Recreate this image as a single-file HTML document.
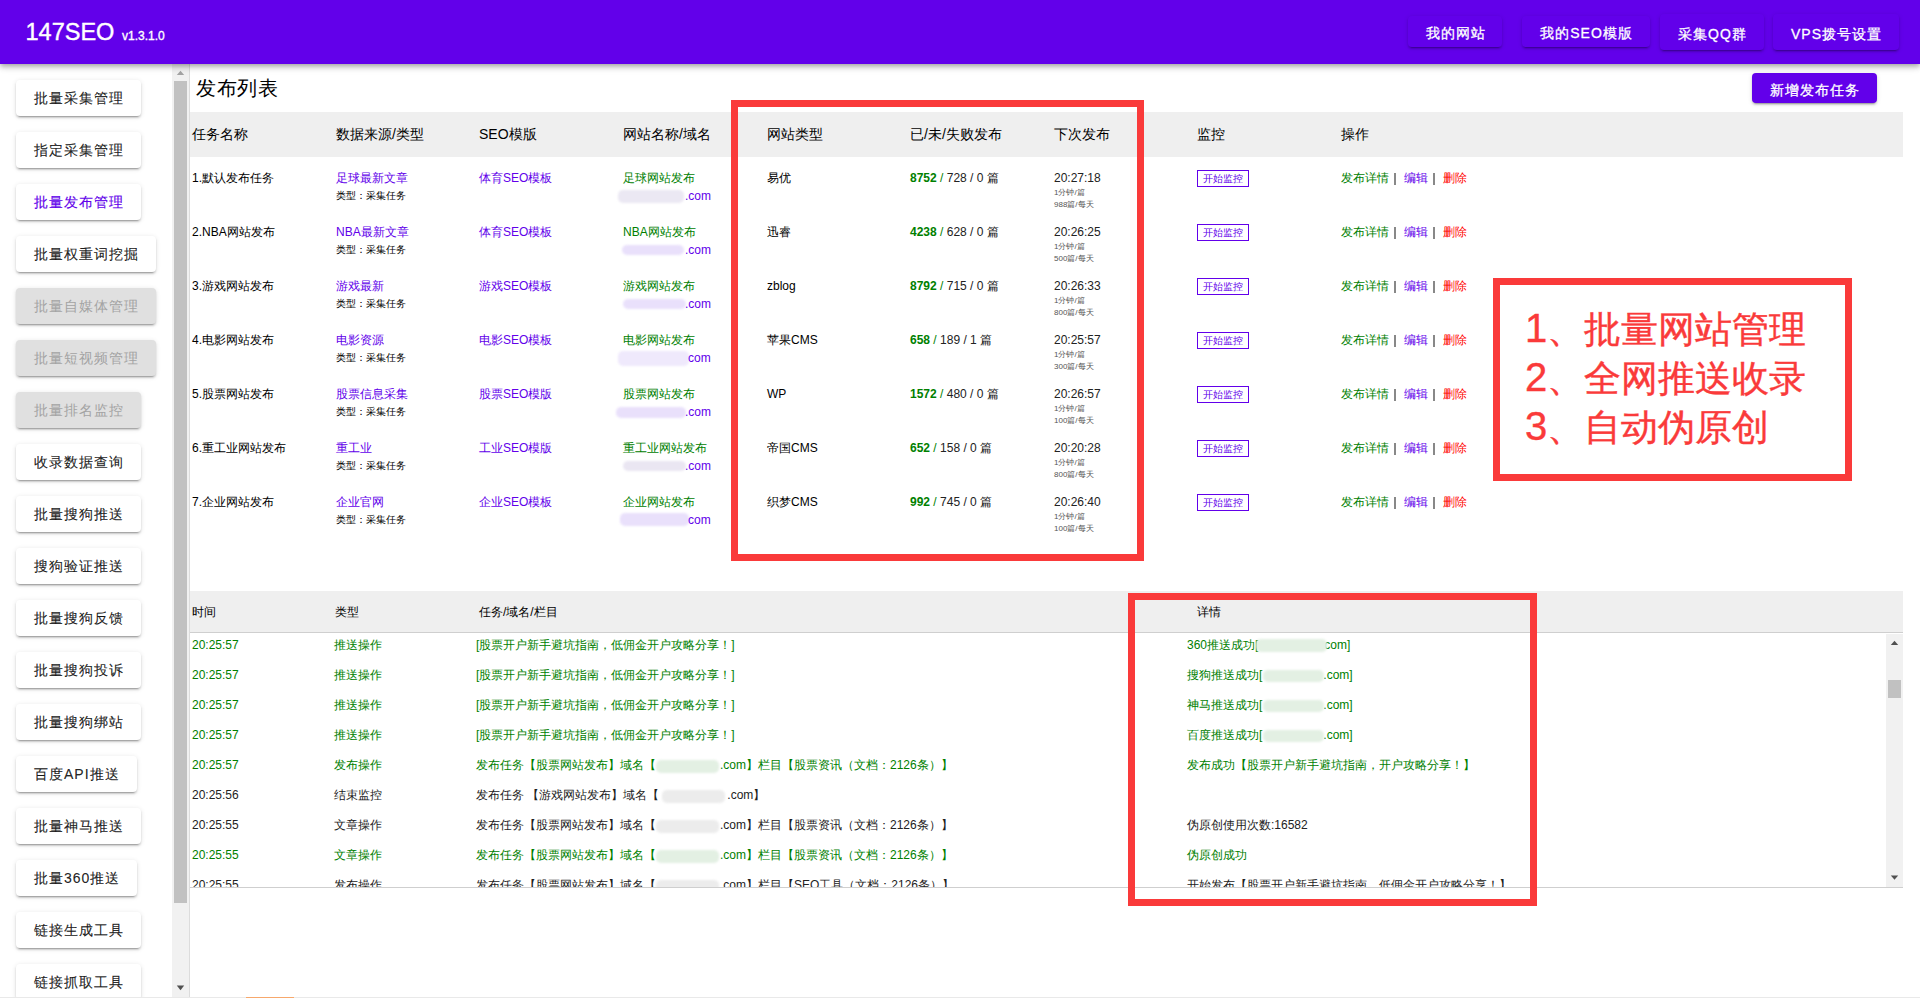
<!DOCTYPE html><html><head><meta charset="utf-8"><style>
*{margin:0;padding:0;box-sizing:border-box}
html,body{width:1920px;height:998px;overflow:hidden;background:#fff;font-family:"Liberation Sans",sans-serif;color:#000}
.ab{position:absolute;white-space:nowrap}
#hdr{position:absolute;left:0;top:0;width:1920px;height:64px;background:#6200ea;z-index:5;
 box-shadow:0 2px 4px -1px rgba(0,0,0,.2),0 4px 5px 0 rgba(0,0,0,.14),0 1px 10px 0 rgba(0,0,0,.12)}
.hb{position:absolute;background:#6200ea;color:#fff;font-size:14px;letter-spacing:1px;text-indent:1px;text-align:center;border-radius:4px;padding-top:2px;-webkit-text-stroke:0.3px #fff;
 box-shadow:0 3px 1px -2px rgba(0,0,0,.2),0 2px 2px 0 rgba(0,0,0,.14),0 1px 5px 0 rgba(0,0,0,.12)}
.sb{position:absolute;left:16px;height:36px;line-height:37px;-webkit-text-stroke:0.15px currentColor;background:#fff;color:rgba(0,0,0,.87);font-size:14px;letter-spacing:1px;padding:0 17px 0 18px;border-radius:4px;white-space:nowrap;
 box-shadow:0 3px 1px -2px rgba(0,0,0,.2),0 2px 2px 0 rgba(0,0,0,.14),0 1px 5px 0 rgba(0,0,0,.12)}
.sb.dis{background:#e0e0e0;color:#a3a3a3;-webkit-text-stroke:0}
.sb.act{color:#6200ea}
.th{position:absolute;font-size:14px;line-height:16px;white-space:nowrap}
.t12{position:absolute;font-size:12px;line-height:14px;white-space:nowrap}
.rb{position:absolute;border:7px solid #fa3a3a}
.blob{position:absolute;border-radius:5px;filter:blur(1px)}
</style></head><body>

<div id="hdr">
<div class="ab" style="left:25.5px;top:18px;font-size:23.5px;line-height:28px;color:#fff;-webkit-text-stroke:0.4px #fff">147SEO</div>
<div class="ab" style="left:122px;top:29px;font-size:12px;line-height:14px;color:#fff;-webkit-text-stroke:0.35px #fff">v1.3.1.0</div>
<div class="hb" style="left:1408px;top:16px;width:94px;height:31px;line-height:31px">我的网站</div>
<div class="hb" style="left:1522px;top:16px;width:128px;height:31px;line-height:31px">我的SEO模版</div>
<div class="hb" style="left:1660px;top:14px;width:104px;height:36px;line-height:36px">采集QQ群</div>
<div class="hb" style="left:1773px;top:14px;width:126px;height:36px;line-height:36px">VPS拨号设置</div>
</div>
<div class="sb" style="top:80px">批量采集管理</div>
<div class="sb" style="top:132px">指定采集管理</div>
<div class="sb act" style="top:184px">批量发布管理</div>
<div class="sb" style="top:236px">批量权重词挖掘</div>
<div class="sb dis" style="top:288px">批量自媒体管理</div>
<div class="sb dis" style="top:340px">批量短视频管理</div>
<div class="sb dis" style="top:392px">批量排名监控</div>
<div class="sb" style="top:444px">收录数据查询</div>
<div class="sb" style="top:496px">批量搜狗推送</div>
<div class="sb" style="top:548px">搜狗验证推送</div>
<div class="sb" style="top:600px">批量搜狗反馈</div>
<div class="sb" style="top:652px">批量搜狗投诉</div>
<div class="sb" style="top:704px">批量搜狗绑站</div>
<div class="sb" style="top:756px">百度API推送</div>
<div class="sb" style="top:808px">批量神马推送</div>
<div class="sb" style="top:860px">批量360推送</div>
<div class="sb" style="top:912px">链接生成工具</div>
<div class="sb" style="top:964px">链接抓取工具</div>
<div class="ab" style="left:172px;top:64px;width:17px;height:934px;background:#f1f1f1"></div>
<div class="ab" style="left:189px;top:64px;width:1px;height:934px;background:#dcdcdc"></div>
<div class="ab" style="left:174px;top:81px;width:13px;height:822px;background:#c1c1c1"></div>
<svg class="ab" style="left:172px;top:64px" width="17" height="17"><path d="M4.8 11 L8.5 6.8 L12.2 11 Z" fill="#a3a3a3"/></svg>
<svg class="ab" style="left:172px;top:981px" width="17" height="17"><path d="M4.8 4.4 L12.2 4.4 L8.5 9.2 Z" fill="#505050"/></svg>
<div class="ab" style="left:196px;top:76px;font-size:20px;line-height:24px;letter-spacing:0.5px">发布列表</div>
<div class="hb" style="left:1752px;top:73px;width:125px;height:30px;line-height:30px">新增发布任务</div>
<div class="ab" style="left:190px;top:112px;width:1713px;height:45px;background:#efefef"></div>
<div class="th" style="left:192px;top:126px">任务名称</div>
<div class="th" style="left:336px;top:126px">数据来源/类型</div>
<div class="th" style="left:479px;top:126px">SEO模版</div>
<div class="th" style="left:623px;top:126px">网站名称/域名</div>
<div class="th" style="left:767px;top:126px">网站类型</div>
<div class="th" style="left:910px;top:126px">已/未/失败发布</div>
<div class="th" style="left:1054px;top:126px">下次发布</div>
<div class="th" style="left:1197px;top:126px">监控</div>
<div class="th" style="left:1341px;top:126px">操作</div>
<div class="t12" style="left:192px;top:171px">1.默认发布任务</div>
<div class="t12" style="left:336px;top:171px;color:#6200ea">足球最新文章</div>
<div class="ab" style="left:336px;top:190px;font-size:10px;line-height:12px">类型：采集任务</div>
<div class="t12" style="left:479px;top:171px;color:#6200ea">体育SEO模板</div>
<div class="t12" style="left:623px;top:171px;color:#008000">足球网站发布</div>
<div class="blob" style="left:618px;top:190px;width:66px;height:13px;background:#ebe8f3"></div>
<div class="t12" style="left:685px;top:189px;color:#6200ea">.com</div>
<div class="t12" style="left:767px;top:171px">易优</div>
<div class="t12" style="left:910px;top:171px;color:#222"><span style="color:#008000"><b>8752</b> /</span> 728 / 0 篇</div>
<div class="t12" style="left:1054px;top:171px;color:#222">20:27:18</div>
<div class="ab" style="left:1054px;top:188px;font-size:8px;line-height:10px;color:#555">1分钟/篇</div>
<div class="ab" style="left:1054px;top:200px;font-size:8px;line-height:10px;color:#555">988篇/每天</div>
<div class="ab" style="left:1197px;top:170px;width:52px;height:17px;border:1px solid #6200ea;color:#6200ea;font-size:10px;line-height:15px;text-align:center">开始监控</div>
<div class="t12" style="left:1341px;top:171px;color:#008000">发布详情</div>
<div class="ab" style="left:1394px;top:173px;width:2px;height:12px;background:#888"></div>
<div class="t12" style="left:1404px;top:171px;color:#6200ea">编辑</div>
<div class="ab" style="left:1433px;top:173px;width:2px;height:12px;background:#888"></div>
<div class="t12" style="left:1443px;top:171px;color:red">删除</div>
<div class="t12" style="left:192px;top:225px">2.NBA网站发布</div>
<div class="t12" style="left:336px;top:225px;color:#6200ea">NBA最新文章</div>
<div class="ab" style="left:336px;top:244px;font-size:10px;line-height:12px">类型：采集任务</div>
<div class="t12" style="left:479px;top:225px;color:#6200ea">体育SEO模板</div>
<div class="t12" style="left:623px;top:225px;color:#008000">NBA网站发布</div>
<div class="blob" style="left:622px;top:245px;width:62px;height:10px;background:#e9e0fb"></div>
<div class="t12" style="left:685px;top:243px;color:#6200ea">.com</div>
<div class="t12" style="left:767px;top:225px">迅睿</div>
<div class="t12" style="left:910px;top:225px;color:#222"><span style="color:#008000"><b>4238</b> /</span> 628 / 0 篇</div>
<div class="t12" style="left:1054px;top:225px;color:#222">20:26:25</div>
<div class="ab" style="left:1054px;top:242px;font-size:8px;line-height:10px;color:#555">1分钟/篇</div>
<div class="ab" style="left:1054px;top:254px;font-size:8px;line-height:10px;color:#555">500篇/每天</div>
<div class="ab" style="left:1197px;top:224px;width:52px;height:17px;border:1px solid #6200ea;color:#6200ea;font-size:10px;line-height:15px;text-align:center">开始监控</div>
<div class="t12" style="left:1341px;top:225px;color:#008000">发布详情</div>
<div class="ab" style="left:1394px;top:227px;width:2px;height:12px;background:#888"></div>
<div class="t12" style="left:1404px;top:225px;color:#6200ea">编辑</div>
<div class="ab" style="left:1433px;top:227px;width:2px;height:12px;background:#888"></div>
<div class="t12" style="left:1443px;top:225px;color:red">删除</div>
<div class="t12" style="left:192px;top:279px">3.游戏网站发布</div>
<div class="t12" style="left:336px;top:279px;color:#6200ea">游戏最新</div>
<div class="ab" style="left:336px;top:298px;font-size:10px;line-height:12px">类型：采集任务</div>
<div class="t12" style="left:479px;top:279px;color:#6200ea">游戏SEO模板</div>
<div class="t12" style="left:623px;top:279px;color:#008000">游戏网站发布</div>
<div class="blob" style="left:623px;top:299px;width:63px;height:10px;background:#e9e0fb"></div>
<div class="t12" style="left:685px;top:297px;color:#6200ea">.com</div>
<div class="t12" style="left:767px;top:279px">zblog</div>
<div class="t12" style="left:910px;top:279px;color:#222"><span style="color:#008000"><b>8792</b> /</span> 715 / 0 篇</div>
<div class="t12" style="left:1054px;top:279px;color:#222">20:26:33</div>
<div class="ab" style="left:1054px;top:296px;font-size:8px;line-height:10px;color:#555">1分钟/篇</div>
<div class="ab" style="left:1054px;top:308px;font-size:8px;line-height:10px;color:#555">800篇/每天</div>
<div class="ab" style="left:1197px;top:278px;width:52px;height:17px;border:1px solid #6200ea;color:#6200ea;font-size:10px;line-height:15px;text-align:center">开始监控</div>
<div class="t12" style="left:1341px;top:279px;color:#008000">发布详情</div>
<div class="ab" style="left:1394px;top:281px;width:2px;height:12px;background:#888"></div>
<div class="t12" style="left:1404px;top:279px;color:#6200ea">编辑</div>
<div class="ab" style="left:1433px;top:281px;width:2px;height:12px;background:#888"></div>
<div class="t12" style="left:1443px;top:279px;color:red">删除</div>
<div class="t12" style="left:192px;top:333px">4.电影网站发布</div>
<div class="t12" style="left:336px;top:333px;color:#6200ea">电影资源</div>
<div class="ab" style="left:336px;top:352px;font-size:10px;line-height:12px">类型：采集任务</div>
<div class="t12" style="left:479px;top:333px;color:#6200ea">电影SEO模板</div>
<div class="t12" style="left:623px;top:333px;color:#008000">电影网站发布</div>
<div class="blob" style="left:618px;top:351px;width:71px;height:15px;background:#efe9fc"></div>
<div class="t12" style="left:688px;top:351px;color:#6200ea">com</div>
<div class="t12" style="left:767px;top:333px">苹果CMS</div>
<div class="t12" style="left:910px;top:333px;color:#222"><span style="color:#008000"><b>658</b> /</span> 189 / 1 篇</div>
<div class="t12" style="left:1054px;top:333px;color:#222">20:25:57</div>
<div class="ab" style="left:1054px;top:350px;font-size:8px;line-height:10px;color:#555">1分钟/篇</div>
<div class="ab" style="left:1054px;top:362px;font-size:8px;line-height:10px;color:#555">300篇/每天</div>
<div class="ab" style="left:1197px;top:332px;width:52px;height:17px;border:1px solid #6200ea;color:#6200ea;font-size:10px;line-height:15px;text-align:center">开始监控</div>
<div class="t12" style="left:1341px;top:333px;color:#008000">发布详情</div>
<div class="ab" style="left:1394px;top:335px;width:2px;height:12px;background:#888"></div>
<div class="t12" style="left:1404px;top:333px;color:#6200ea">编辑</div>
<div class="ab" style="left:1433px;top:335px;width:2px;height:12px;background:#888"></div>
<div class="t12" style="left:1443px;top:333px;color:red">删除</div>
<div class="t12" style="left:192px;top:387px">5.股票网站发布</div>
<div class="t12" style="left:336px;top:387px;color:#6200ea">股票信息采集</div>
<div class="ab" style="left:336px;top:406px;font-size:10px;line-height:12px">类型：采集任务</div>
<div class="t12" style="left:479px;top:387px;color:#6200ea">股票SEO模版</div>
<div class="t12" style="left:623px;top:387px;color:#008000">股票网站发布</div>
<div class="blob" style="left:616px;top:407px;width:70px;height:11px;background:#e9e0fb"></div>
<div class="t12" style="left:685px;top:405px;color:#6200ea">.com</div>
<div class="t12" style="left:767px;top:387px">WP</div>
<div class="t12" style="left:910px;top:387px;color:#222"><span style="color:#008000"><b>1572</b> /</span> 480 / 0 篇</div>
<div class="t12" style="left:1054px;top:387px;color:#222">20:26:57</div>
<div class="ab" style="left:1054px;top:404px;font-size:8px;line-height:10px;color:#555">1分钟/篇</div>
<div class="ab" style="left:1054px;top:416px;font-size:8px;line-height:10px;color:#555">100篇/每天</div>
<div class="ab" style="left:1197px;top:386px;width:52px;height:17px;border:1px solid #6200ea;color:#6200ea;font-size:10px;line-height:15px;text-align:center">开始监控</div>
<div class="t12" style="left:1341px;top:387px;color:#008000">发布详情</div>
<div class="ab" style="left:1394px;top:389px;width:2px;height:12px;background:#888"></div>
<div class="t12" style="left:1404px;top:387px;color:#6200ea">编辑</div>
<div class="ab" style="left:1433px;top:389px;width:2px;height:12px;background:#888"></div>
<div class="t12" style="left:1443px;top:387px;color:red">删除</div>
<div class="t12" style="left:192px;top:441px">6.重工业网站发布</div>
<div class="t12" style="left:336px;top:441px;color:#6200ea">重工业</div>
<div class="ab" style="left:336px;top:460px;font-size:10px;line-height:12px">类型：采集任务</div>
<div class="t12" style="left:479px;top:441px;color:#6200ea">工业SEO模版</div>
<div class="t12" style="left:623px;top:441px;color:#008000">重工业网站发布</div>
<div class="blob" style="left:623px;top:461px;width:63px;height:10px;background:#eae6f2"></div>
<div class="t12" style="left:685px;top:459px;color:#6200ea">.com</div>
<div class="t12" style="left:767px;top:441px">帝国CMS</div>
<div class="t12" style="left:910px;top:441px;color:#222"><span style="color:#008000"><b>652</b> /</span> 158 / 0 篇</div>
<div class="t12" style="left:1054px;top:441px;color:#222">20:20:28</div>
<div class="ab" style="left:1054px;top:458px;font-size:8px;line-height:10px;color:#555">1分钟/篇</div>
<div class="ab" style="left:1054px;top:470px;font-size:8px;line-height:10px;color:#555">800篇/每天</div>
<div class="ab" style="left:1197px;top:440px;width:52px;height:17px;border:1px solid #6200ea;color:#6200ea;font-size:10px;line-height:15px;text-align:center">开始监控</div>
<div class="t12" style="left:1341px;top:441px;color:#008000">发布详情</div>
<div class="ab" style="left:1394px;top:443px;width:2px;height:12px;background:#888"></div>
<div class="t12" style="left:1404px;top:441px;color:#6200ea">编辑</div>
<div class="ab" style="left:1433px;top:443px;width:2px;height:12px;background:#888"></div>
<div class="t12" style="left:1443px;top:441px;color:red">删除</div>
<div class="t12" style="left:192px;top:495px">7.企业网站发布</div>
<div class="t12" style="left:336px;top:495px;color:#6200ea">企业官网</div>
<div class="ab" style="left:336px;top:514px;font-size:10px;line-height:12px">类型：采集任务</div>
<div class="t12" style="left:479px;top:495px;color:#6200ea">企业SEO模板</div>
<div class="t12" style="left:623px;top:495px;color:#008000">企业网站发布</div>
<div class="blob" style="left:620px;top:513px;width:69px;height:13px;background:#e9e0fb"></div>
<div class="t12" style="left:688px;top:513px;color:#6200ea">com</div>
<div class="t12" style="left:767px;top:495px">织梦CMS</div>
<div class="t12" style="left:910px;top:495px;color:#222"><span style="color:#008000"><b>992</b> /</span> 745 / 0 篇</div>
<div class="t12" style="left:1054px;top:495px;color:#222">20:26:40</div>
<div class="ab" style="left:1054px;top:512px;font-size:8px;line-height:10px;color:#555">1分钟/篇</div>
<div class="ab" style="left:1054px;top:524px;font-size:8px;line-height:10px;color:#555">100篇/每天</div>
<div class="ab" style="left:1197px;top:494px;width:52px;height:17px;border:1px solid #6200ea;color:#6200ea;font-size:10px;line-height:15px;text-align:center">开始监控</div>
<div class="t12" style="left:1341px;top:495px;color:#008000">发布详情</div>
<div class="ab" style="left:1394px;top:497px;width:2px;height:12px;background:#888"></div>
<div class="t12" style="left:1404px;top:495px;color:#6200ea">编辑</div>
<div class="ab" style="left:1433px;top:497px;width:2px;height:12px;background:#888"></div>
<div class="t12" style="left:1443px;top:495px;color:red">删除</div>
<div class="ab" style="left:190px;top:591px;width:1713px;height:42px;background:#efefef;border-bottom:1px solid #cfcfcf"></div>
<div class="t12" style="left:192px;top:605px">时间</div>
<div class="t12" style="left:335px;top:605px">类型</div>
<div class="t12" style="left:479px;top:605px">任务/域名/栏目</div>
<div class="t12" style="left:1197px;top:605px">详情</div>
<div class="ab" style="left:190px;top:634px;width:1696px;height:253px;overflow:hidden">
<div class="t12" style="left:2px;top:4px;color:#008000">20:25:57</div>
<div class="t12" style="left:144px;top:4px;color:#008000">推送操作</div>
<div class="t12" style="left:286px;top:4px;color:#008000">[股票开户新手避坑指南，低佣金开户攻略分享！]</div>
<div class="t12" style="left:997px;top:4px;color:#008000">360推送成功[<span style="display:inline-block;width:66px"></span>com]</div>
<div class="blob" style="left:1066px;top:5px;width:71px;height:13px;background:#e3f0e3"></div>
<div class="t12" style="left:2px;top:34px;color:#008000">20:25:57</div>
<div class="t12" style="left:144px;top:34px;color:#008000">推送操作</div>
<div class="t12" style="left:286px;top:34px;color:#008000">[股票开户新手避坑指南，低佣金开户攻略分享！]</div>
<div class="t12" style="left:997px;top:34px;color:#008000">搜狗推送成功[<span style="display:inline-block;width:61px"></span>.com]</div>
<div class="blob" style="left:1073px;top:36px;width:61px;height:12px;background:#e3f0e3"></div>
<div class="t12" style="left:2px;top:64px;color:#008000">20:25:57</div>
<div class="t12" style="left:144px;top:64px;color:#008000">推送操作</div>
<div class="t12" style="left:286px;top:64px;color:#008000">[股票开户新手避坑指南，低佣金开户攻略分享！]</div>
<div class="t12" style="left:997px;top:64px;color:#008000">神马推送成功[<span style="display:inline-block;width:61px"></span>.com]</div>
<div class="blob" style="left:1073px;top:66px;width:61px;height:12px;background:#e3f0e3"></div>
<div class="t12" style="left:2px;top:94px;color:#008000">20:25:57</div>
<div class="t12" style="left:144px;top:94px;color:#008000">推送操作</div>
<div class="t12" style="left:286px;top:94px;color:#008000">[股票开户新手避坑指南，低佣金开户攻略分享！]</div>
<div class="t12" style="left:997px;top:94px;color:#008000">百度推送成功[<span style="display:inline-block;width:61px"></span>.com]</div>
<div class="blob" style="left:1073px;top:96px;width:61px;height:12px;background:#e3f0e3"></div>
<div class="t12" style="left:2px;top:124px;color:#008000">20:25:57</div>
<div class="t12" style="left:144px;top:124px;color:#008000">发布操作</div>
<div class="t12" style="left:286px;top:124px;color:#008000">发布任务【股票网站发布】域名【<span style="display:inline-block;width:64px"></span>.com】栏目【股票资讯（文档：2126条）】</div>
<div class="blob" style="left:466px;top:126px;width:63px;height:13px;background:#e3f0e3"></div>
<div class="t12" style="left:997px;top:124px;color:#008000">发布成功【股票开户新手避坑指南，开户攻略分享！】</div>
<div class="t12" style="left:2px;top:154px;color:#222">20:25:56</div>
<div class="t12" style="left:144px;top:154px;color:#222">结束监控</div>
<div class="t12" style="left:286px;top:154px;color:#222">发布任务 【游戏网站发布】域名【<span style="display:inline-block;width:68px"></span>.com】</div>
<div class="blob" style="left:472px;top:156px;width:63px;height:13px;background:#ececec"></div>
<div class="t12" style="left:2px;top:184px;color:#222">20:25:55</div>
<div class="t12" style="left:144px;top:184px;color:#222">文章操作</div>
<div class="t12" style="left:286px;top:184px;color:#222">发布任务【股票网站发布】域名【<span style="display:inline-block;width:64px"></span>.com】栏目【股票资讯（文档：2126条）】</div>
<div class="blob" style="left:466px;top:186px;width:63px;height:13px;background:#ececec"></div>
<div class="t12" style="left:997px;top:184px;color:#222">伪原创使用次数:16582</div>
<div class="t12" style="left:2px;top:214px;color:#008000">20:25:55</div>
<div class="t12" style="left:144px;top:214px;color:#008000">文章操作</div>
<div class="t12" style="left:286px;top:214px;color:#008000">发布任务【股票网站发布】域名【<span style="display:inline-block;width:64px"></span>.com】栏目【股票资讯（文档：2126条）】</div>
<div class="blob" style="left:466px;top:216px;width:63px;height:13px;background:#e3f0e3"></div>
<div class="t12" style="left:997px;top:214px;color:#008000">伪原创成功</div>
<div class="t12" style="left:2px;top:244px;color:#222">20:25:55</div>
<div class="t12" style="left:144px;top:244px;color:#222">发布操作</div>
<div class="t12" style="left:286px;top:244px;color:#222">发布任务【股票网站发布】域名【<span style="display:inline-block;width:64px"></span>.com】栏目【SEO工具（文档：2126条）】</div>
<div class="blob" style="left:466px;top:246px;width:63px;height:13px;background:#ececec"></div>
<div class="t12" style="left:997px;top:244px;color:#222">开始发布【股票开户新手避坑指南，低佣金开户攻略分享！】</div>
</div>
<div class="ab" style="left:190px;top:887px;width:1713px;height:1px;background:#cfcfcf"></div>
<div class="ab" style="left:1886px;top:634px;width:17px;height:253px;background:#f1f1f1"></div>
<div class="ab" style="left:1888px;top:680px;width:13px;height:18px;background:#c1c1c1"></div>
<svg class="ab" style="left:1886px;top:634px" width="17" height="17"><path d="M4.8 11 L8.5 6.8 L12.2 11 Z" fill="#505050"/></svg>
<svg class="ab" style="left:1886px;top:870px" width="17" height="17"><path d="M4.8 5.5 L12.2 5.5 L8.5 9.8 Z" fill="#505050"/></svg>
<div class="rb" style="left:731px;top:100px;width:413px;height:461px"></div>
<div class="rb" style="left:1128px;top:593px;width:409px;height:313px"></div>
<div class="rb" style="left:1493px;top:278px;width:359px;height:203px"></div>
<div class="ab" style="left:1525px;top:304px;font-size:37px;line-height:48px;color:#fa3a3a;-webkit-text-stroke:0.4px #fa3a3a"><span style="font-size:40px">1</span>、批量网站管理</div>
<div class="ab" style="left:1525px;top:353px;font-size:37px;line-height:48px;color:#fa3a3a;-webkit-text-stroke:0.4px #fa3a3a"><span style="font-size:40px">2</span>、全网推送收录</div>
<div class="ab" style="left:1525px;top:402px;font-size:37px;line-height:48px;color:#fa3a3a;-webkit-text-stroke:0.4px #fa3a3a"><span style="font-size:40px">3</span>、自动伪原创</div>
<div class="ab" style="left:0;top:997px;width:1920px;height:1px;background:#e9e9e9"></div>
<div class="ab" style="left:246px;top:997px;width:48px;height:1px;background:#f7a86c"></div>
</body></html>
